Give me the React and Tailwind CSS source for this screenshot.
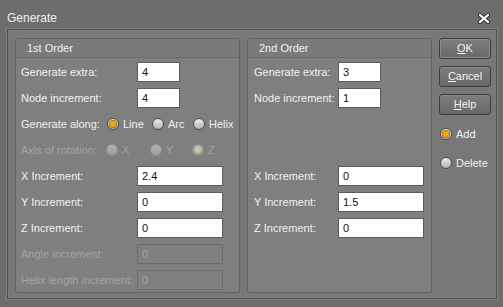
const FONT = { fontFamily: '"Liberation Sans", Arial, sans-serif' }

function Radio({ checked, disabled }) {
  return (
    <span
      className={`relative w-[12px] h-[12px] rounded-full border flex items-center justify-center shrink-0 ${
        disabled
          ? 'border-[#8f8f8f] bg-gradient-to-b from-[#b4b4b4] to-[#9c9c9c]'
          : 'border-[#4c4c4c] bg-gradient-to-b from-[#ececec] to-[#b4b4b4]'
      }`}
    >
      {checked && (
        <span
          className={`w-[6px] h-[6px] rounded-full ${
            disabled ? 'bg-[#cfc29c]' : 'bg-[#f4a416] shadow-[0_0_0_1px_#b8740a]'
          }`}
        />
      )}
    </span>
  )
}

function RadioItem({ label, checked, disabled, className = '' }) {
  return (
    <div className={`flex items-center gap-[4px] whitespace-nowrap ${className}`}>
      <Radio checked={checked} disabled={disabled} />
      <span className={disabled ? 'text-[#a3a3a3]' : 'text-[#f2f2f2]'}>{label}</span>
    </div>
  )
}

function Field({ label, value, labelW, inputW, disabled }) {
  return (
    <div className="flex items-center h-[20px] whitespace-nowrap">
      <span className={`${labelW} shrink-0 ${disabled ? 'text-[#a3a3a3]' : 'text-[#f2f2f2]'}`}>{label}</span>
      <div
        className={`${inputW} h-[20px] border flex items-center pl-[4px] ${
          disabled ? 'border-[#6c6c6c] bg-[#808080] text-[#a3a3a3]' : 'border-[#5c5c5c] bg-white text-[#101020]'
        }`}
      >
        {value}
      </div>
    </div>
  )
}

function Button({ label, def }) {
  return (
    <div
      className={`w-[52px] h-[21px] rounded-[3px] border border-[#3c3c3c] bg-gradient-to-b from-[#7e7e7e] to-[#686868] flex items-center justify-center text-[#f4f4f4] ${
        def ? 'shadow-[inset_0_0_0_1px_#8c8c8c]' : 'shadow-[inset_0_1px_0_#8a8a8a]'
      }`}
    >
      <span>
        <span className="underline">{label[0]}</span>
        {label.slice(1)}
      </span>
    </div>
  )
}

function GroupBox({ title, className, children }) {
  return (
    <div className={`h-[255px] rounded-[3px] border border-[#616161] bg-[#7f7f7f] flex flex-col ${className}`}>
      <div className="h-[19px] border-b border-[#686868] bg-[#7a7a7a] flex items-center pl-[11px] text-[#f2f2f2]">{title}</div>
      {children}
    </div>
  )
}

export default function App() {
  return (
    <div className="w-[503px] h-[307px] bg-[#6d6d6d] text-[11px] flex flex-col" style={FONT}>
      {/* Title bar */}
      <div className="h-[29px] flex items-center justify-between pt-[7px] pl-[7px] pr-[13px] text-[#f0f0f0]">
        <span className="text-[12px]">Generate</span>
        <svg width="12" height="11" viewBox="0 0 12 11">
          <path d="M2 2 L10 9 M10 2 L2 9" stroke="#2e2e2e" strokeWidth="4" strokeLinecap="round" />
          <path d="M2 2 L10 9 M10 2 L2 9" stroke="#ffffff" strokeWidth="2.2" strokeLinecap="round" />
        </svg>
      </div>

      {/* Inner frame */}
      <div className="ml-[7px] w-[490px] h-[270px] border border-[#4e4e4e] shadow-[0_0_0_1px_#828282] bg-[#787878] flex gap-[7px] pl-[7px] pt-[8px]">
        <GroupBox title="1st Order" className="w-[225px]">
          <div className="flex flex-col gap-[6px] mt-[4px] pl-[5px]">
            <Field label="Generate extra:" value="4" labelW="w-[116px]" inputW="w-[43px]" />
            <Field label="Node increment:" value="4" labelW="w-[116px]" inputW="w-[43px]" />
            <div className="flex items-center h-[20px] whitespace-nowrap">
              <span className="w-[86px] shrink-0 text-[#f2f2f2]">Generate along:</span>
              <RadioItem label="Line" checked className="w-[45px]" />
              <RadioItem label="Arc" className="w-[41px]" />
              <RadioItem label="Helix" />
            </div>
            <div className="flex items-center h-[20px] whitespace-nowrap">
              <span className="w-[85px] shrink-0 text-[#a3a3a3]">Axis of rotation:</span>
              <RadioItem label="X" disabled className="w-[44px]" />
              <RadioItem label="Y" disabled className="w-[42px]" />
              <RadioItem label="Z" checked disabled />
            </div>
            <Field label="X Increment:" value="2.4" labelW="w-[116px]" inputW="w-[86px]" />
            <Field label="Y Increment:" value="0" labelW="w-[116px]" inputW="w-[86px]" />
            <Field label="Z Increment:" value="0" labelW="w-[116px]" inputW="w-[86px]" />
            <Field label="Angle increment:" value="0" labelW="w-[116px]" inputW="w-[86px]" disabled />
            <Field label="Helix length increment:" value="0" labelW="w-[116px]" inputW="w-[86px]" disabled />
          </div>
        </GroupBox>

        <GroupBox title="2nd Order" className="w-[185px]">
          <div className="flex flex-col gap-[6px] mt-[4px] pl-[6px]">
            <Field label="Generate extra:" value="3" labelW="w-[84px]" inputW="w-[43px]" />
            <Field label="Node increment:" value="1" labelW="w-[84px]" inputW="w-[43px]" />
            <div className="h-[20px]" />
            <div className="h-[20px]" />
            <Field label="X Increment:" value="0" labelW="w-[84px]" inputW="w-[86px]" />
            <Field label="Y Increment:" value="1.5" labelW="w-[84px]" inputW="w-[86px]" />
            <Field label="Z Increment:" value="0" labelW="w-[84px]" inputW="w-[86px]" />
          </div>
        </GroupBox>

        <div className="flex flex-col">
          <div className="flex flex-col gap-[7px]">
            <Button label="OK" def />
            <Button label="Cancel" />
            <Button label="Help" />
          </div>
          <div className="flex flex-col gap-[12px] mt-[11px] pl-[1px]">
            <RadioItem label="Add" checked />
            <RadioItem label="Delete" />
          </div>
        </div>
      </div>
    </div>
  )
}
